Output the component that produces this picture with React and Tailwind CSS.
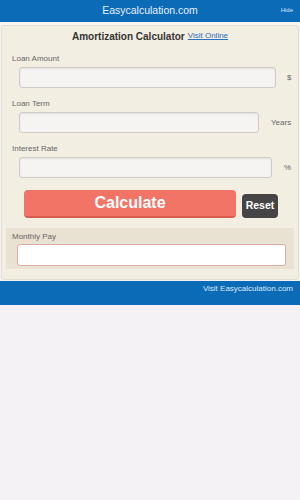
import React from 'react';

const Field = ({ label, width, unit, unitClass }) => (
    <div className="mt-[11px]">
        <div className="ml-[10px] h-[10px] text-[8px] leading-[10px] text-[#666]">{label}</div>
        <div className="mt-[3px] flex items-center">
            <input
                className={`ml-[17px] h-[21px] ${width} rounded-[3px] border border-[#cfccc6] bg-[#f5f4f2] shadow-[inset_0_1px_2px_rgba(0,0,0,0.08)] outline-none`}
            />
            <span className={`text-[8px] text-[#666] ${unitClass}`}>{unit}</span>
        </div>
    </div>
);

const App = () => {
    return (
        <div className="min-h-[500px] bg-[#f4f2f5] font-['Liberation_Sans',Arial,sans-serif]">
            <div className="relative flex h-[22px] items-center justify-center bg-[#0b6bb7]">
                <span className="text-[10.5px] text-[#e6f0fa]">Easycalculation.com</span>
                <span className="absolute right-[7px] top-[6px] text-[6px] text-[#d8e6f5]">Hide</span>
            </div>
            <div className="h-[3px] bg-[#f8f7f4]"></div>

            <div className="mx-[1px] rounded-[3px] border border-[#e3ded2] bg-[#f3eee2] pb-[10px]">
                <div className="mt-[3px] flex h-[14px] items-center justify-center">
                    <span className="text-[10px] font-bold text-[#333]">Amortization Calculator</span>
                    <a href="#" className="ml-[3px] text-[8px] text-[#2d6fc0] underline">Visit Online</a>
                </div>

                <Field label="Loan Amount" width="w-[257px]" unit="$" unitClass="ml-[11px]" />
                <Field label="Loan Term" width="w-[240px]" unit="Years" unitClass="ml-[12px]" />
                <Field label="Interest Rate" width="w-[253px]" unit="%" unitClass="ml-[12px]" />

                <div className="mt-[12px] flex items-end">
                    <button className="ml-[22px] h-[28px] w-[212px] rounded-[4px] border-b-2 border-[#d85c50] bg-[#f27466] text-[16px] font-bold text-white">
                        Calculate
                    </button>
                    <button className="ml-[6px] h-[24px] w-[36px] rounded-[4px] bg-[#454545] text-[10.5px] font-bold text-white">
                        Reset
                    </button>
                </div>

                <div className="mx-[4px] mt-[10px] bg-[#e9e1d2] pb-[2px] pt-[4px]">
                    <div className="ml-[6px] h-[10px] text-[8px] leading-[10px] text-[#666]">Monthly Pay</div>
                    <input className="ml-[11px] mt-[2px] h-[22px] w-[269px] rounded-[3px] border border-[#deaaa2] bg-white outline-none" />
                </div>
            </div>

            <div className="mt-[1px] flex h-[24px] justify-end bg-[#0b6bb7] pr-[7px] pt-[2px]">
                <span className="text-[8px] text-[#dbe8f6]">Visit Easycalculation.com</span>
            </div>
        </div>
    );
};

export default App;
